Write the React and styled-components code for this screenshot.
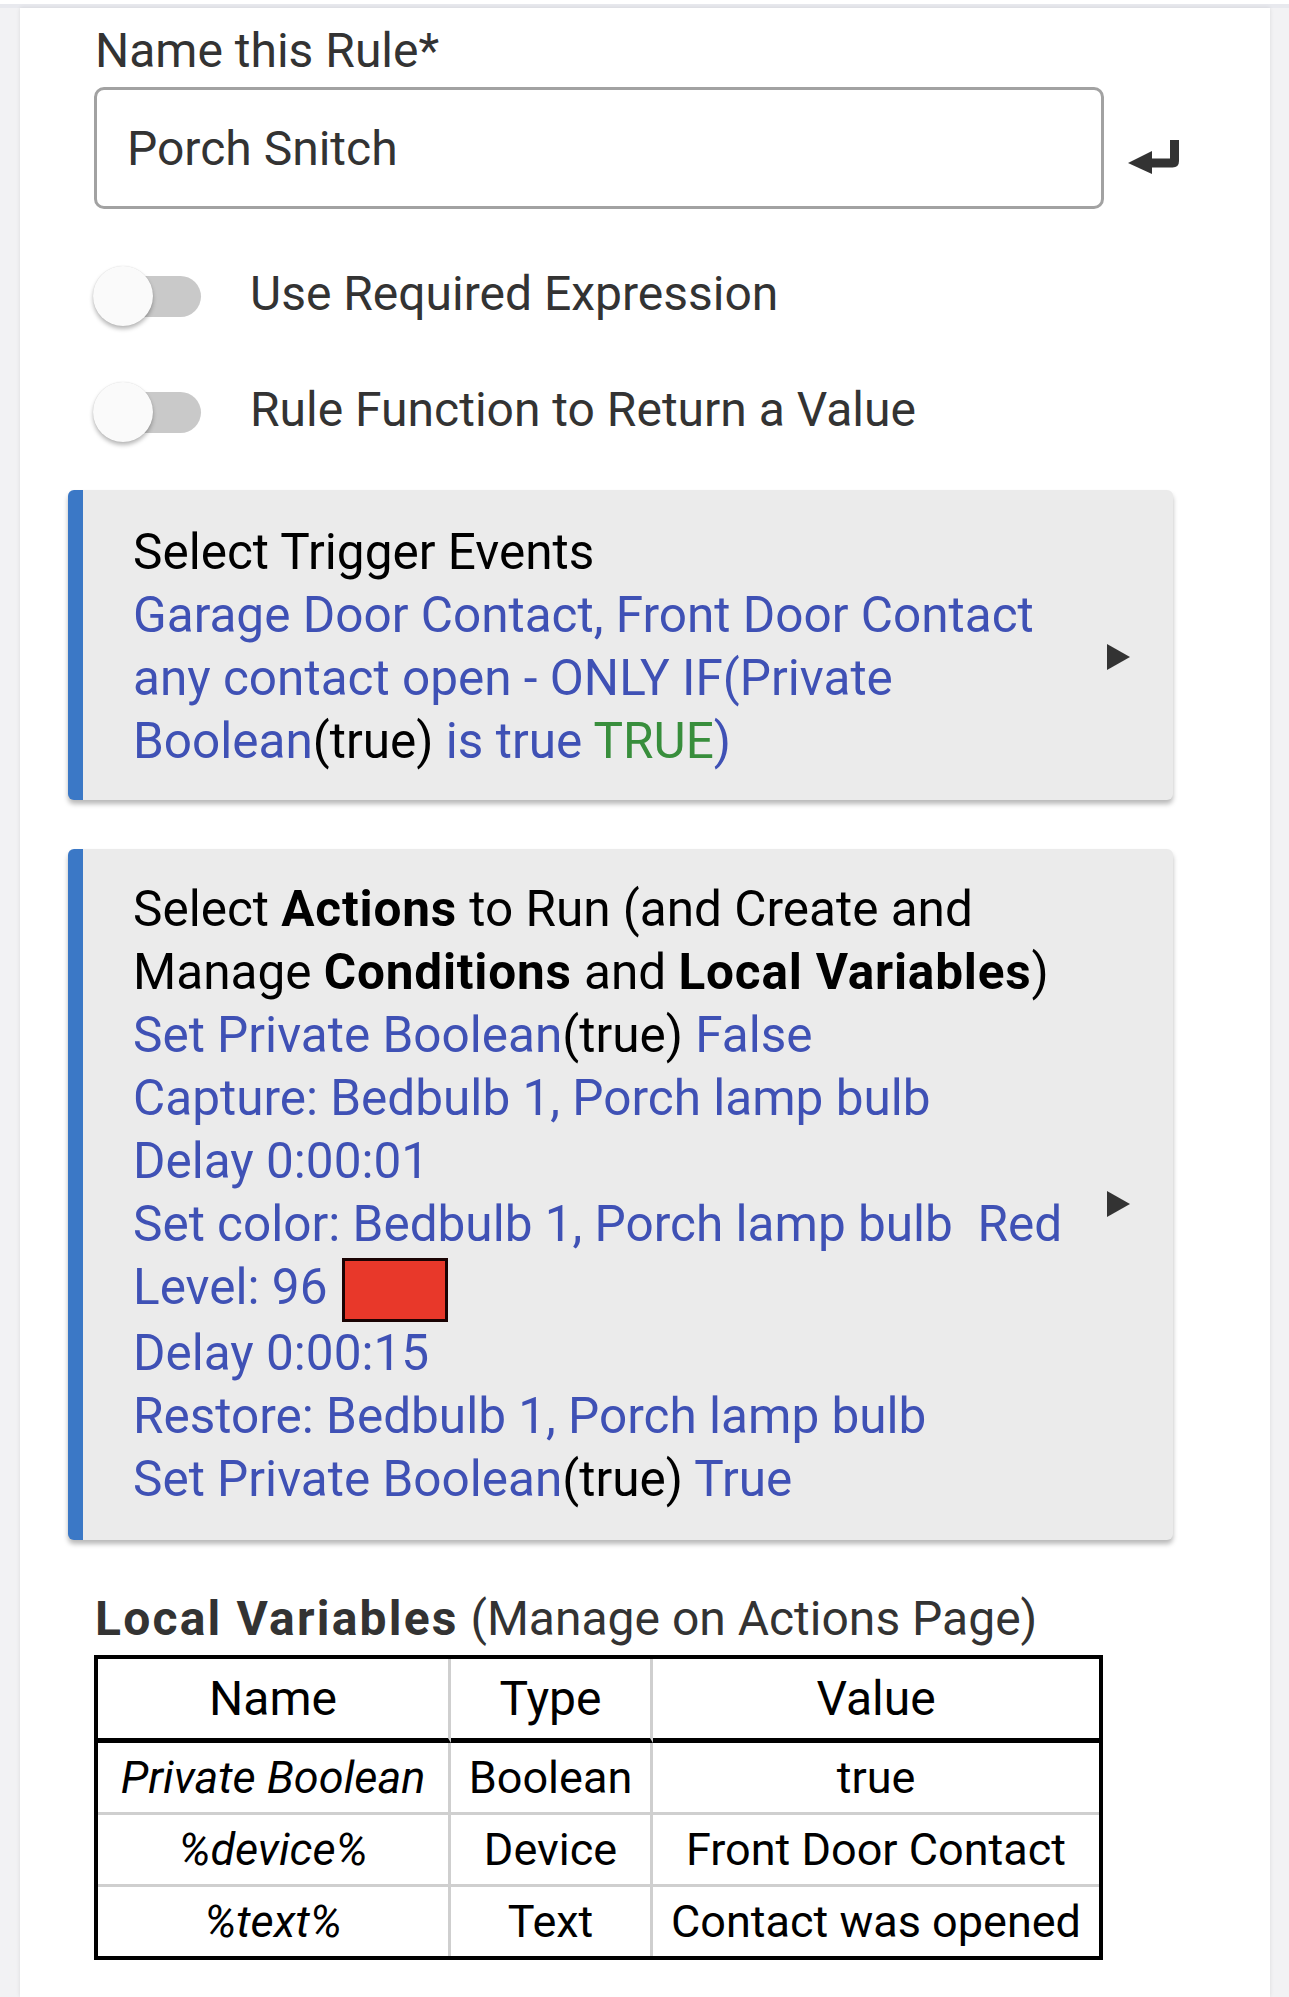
import React from 'react';
import styled, { createGlobalStyle } from 'styled-components';

const GlobalStyle = createGlobalStyle`
  html, body { margin: 0; padding: 0; }
  body {
    background: #f2f2f4;
    font-family: Roboto, "Noto Sans", "Liberation Sans", Arial, sans-serif;
    -webkit-font-smoothing: antialiased;
  }
`;

const Frame = styled.div`
  min-height: 1997px;
  border-top: 4px solid #ffffff;
`;

const TopBand = styled.div`
  height: 4px;
  background: #e8e9ee;
`;

const Sheet = styled.main`
  margin: 0 19px 0 20px;
  min-height: 1989px;
  background: #ffffff;
  box-shadow: 0 0 4px rgba(0, 0, 0, 0.1);
  padding: 11px 0 0 48px;
  box-sizing: border-box;
`;

const Field = styled.div`
  padding-left: 26px;
`;

const Label = styled.div`
  font-size: 48px;
  line-height: 64px;
  color: #333;
  padding-left: 1px;
`;

const InputRow = styled.div`
  display: flex;
  align-items: center;
  margin-top: 4px;
`;

const TextInput = styled.input`
  box-sizing: border-box;
  width: 1010px;
  height: 122px;
  border: 3px solid #a2a2a2;
  border-radius: 10px;
  padding: 0 30px;
  font-family: inherit;
  font-size: 48px;
  color: #333;
  background: #fff;
  outline: none;
`;

const EnterIcon = styled.svg`
  margin-left: 24px;
  margin-top: 18px;
  flex: none;
`;

const ToggleRow = styled.div`
  display: flex;
  align-items: center;
  height: 60px;
  margin-top: ${(p) => p.$gap}px;
  margin-left: -1px;
`;

const Switch = styled.span`
  position: relative;
  display: inline-block;
  width: 108px;
  height: 41px;
  flex: none;
`;

const Track = styled.span`
  display: block;
  margin-left: 5px;
  width: 103px;
  height: 41px;
  border-radius: 21px;
  background: #c9c9c9;
`;

const Knob = styled.span`
  position: absolute;
  left: 0;
  top: -10px;
  width: 60px;
  height: 60px;
  border-radius: 50%;
  background: #fafafa;
  box-shadow: 0 3px 4px rgba(0, 0, 0, 0.28), 0 0 1px rgba(0, 0, 0, 0.15);
`;

const ToggleText = styled.span`
  margin-left: 49px;
  margin-top: -6px;
  font-size: 48px;
  color: #333;
`;

const Panel = styled.section`
  display: flex;
  align-items: center;
  width: 1105px;
  box-sizing: border-box;
  margin-top: ${(p) => p.$gap}px;
  padding: ${(p) => p.$pad};
  background: #ebebeb;
  border-left: 15px solid #3b78c6;
  border-radius: 6px;
  box-shadow: 0 4px 5px rgba(0, 0, 0, 0.28);
`;

const PanelText = styled.div`
  flex: 1;
  font-size: 49.5px;
  line-height: 63px;
  color: #000;
`;

const Line = styled.div``;

const Blue = styled.span`
  color: #3f51b5;
`;

const Green = styled.span`
  color: #388e3c;
`;

const Strong = styled.b`
  font-weight: 700;
  letter-spacing: ${(p) => p.$spacing || 0}px;
`;

const Swatch = styled.span`
  display: inline-block;
  vertical-align: middle;
  box-sizing: border-box;
  width: 106px;
  height: 64px;
  margin: -2px 0 0 15px;
  background: #e8382a;
  border: 3px solid #1a0303;
`;

const Chevron = styled.svg`
  flex: none;
  margin-left: 27px;
  margin-top: 20px;
`;

const Heading = styled.div`
  margin-top: 47px;
  font-size: 48px;
  line-height: 64px;
  color: #333;
  padding-left: 1px;
`;

const Grid = styled.div`
  margin-top: 4px;
  width: 1009px;
  box-sizing: border-box;
  border: 4px solid #000;
  display: grid;
  grid-template-columns: 353px 202px 1fr;
`;

const HeadCell = styled.div`
  box-sizing: border-box;
  height: 84px;
  display: flex;
  align-items: center;
  justify-content: center;
  font-size: 48px;
  color: #000;
  border-bottom: 5px solid #000;
  border-right: ${(p) => (p.$last ? 'none' : '3px solid #cfcfcf')};
`;

const Cell = styled.div`
  box-sizing: border-box;
  height: ${(p) => (p.$bottom ? 69 : 72)}px;
  display: flex;
  align-items: center;
  justify-content: center;
  font-size: 45px;
  color: #000;
  font-style: ${(p) => (p.$italic ? 'italic' : 'normal')};
  white-space: nowrap;
  border-bottom: ${(p) => (p.$bottom ? 'none' : '3px solid #cfcfcf')};
  border-right: ${(p) => (p.$last ? 'none' : '3px solid #cfcfcf')};
`;

const ArrowRight = () => (
  <Chevron width="23" height="26" viewBox="0 0 23 26">
    <polygon points="0,0 23,13 0,26" fill="#333" />
  </Chevron>
);

const rows = [
  ['Private Boolean', 'Boolean', 'true'],
  ['%device%', 'Device', 'Front Door Contact'],
  ['%text%', 'Text', 'Contact was opened'],
];

export default function App() {
  return (
    <>
      <GlobalStyle />
      <Frame>
        <TopBand />
        <Sheet>
          <Field>
            <Label>Name this Rule*</Label>
            <InputRow>
              <TextInput defaultValue="Porch Snitch" readOnly />
              <EnterIcon width="52" height="34" viewBox="0 0 52 34">
                <path
                  d="M42 0 H51 V21 Q51 27.5 44.5 27.5 H23 V18.5 H42 Z"
                  fill="#333"
                />
                <polygon points="0,23 24,11 24,34" fill="#333" />
              </EnterIcon>
            </InputRow>
            <ToggleRow $gap={57}>
              <Switch>
                <Track />
                <Knob />
              </Switch>
              <ToggleText>Use Required Expression</ToggleText>
            </ToggleRow>
            <ToggleRow $gap={56}>
              <Switch>
                <Track />
                <Knob />
              </Switch>
              <ToggleText>Rule Function to Return a Value</ToggleText>
            </ToggleRow>
          </Field>

          <Panel $gap={48} $pad="31px 43px 27px 50px">
            <PanelText>
              <Line>Select Trigger Events</Line>
              <Line>
                <Blue>
                  Garage Door Contact, Front Door Contact any contact open - ONLY IF(Private
                  Boolean
                </Blue>
                (true)
                <Blue> is true </Blue>
                <Green>TRUE</Green>
                <Blue>)</Blue>
              </Line>
            </PanelText>
            <ArrowRight />
          </Panel>

          <Panel $gap={49} $pad="29px 43px 29px 50px">
            <PanelText>
              <Line>
                Select <Strong $spacing={0.8}>Actions</Strong> to Run (and Create and Manage{' '}
                <Strong $spacing={0.8}>Conditions</Strong> and{' '}
                <Strong $spacing={0.8}>Local Variables</Strong>)
              </Line>
              <Line>
                <Blue>Set Private Boolean</Blue>(true) <Blue>False</Blue>
              </Line>
              <Line>
                <Blue>Capture: Bedbulb 1, Porch lamp bulb</Blue>
              </Line>
              <Line>
                <Blue>Delay 0:00:01</Blue>
              </Line>
              <Line>
                <Blue>Set color: Bedbulb 1, Porch lamp bulb&nbsp; Red Level: 96</Blue>
                <Swatch />
              </Line>
              <Line>
                <Blue>Delay 0:00:15</Blue>
              </Line>
              <Line>
                <Blue>Restore: Bedbulb 1, Porch lamp bulb</Blue>
              </Line>
              <Line>
                <Blue>Set Private Boolean</Blue>(true) <Blue>True</Blue>
              </Line>
            </PanelText>
            <ArrowRight />
          </Panel>

          <Field>
            <Heading>
              <Strong $spacing={2.2}>Local Variables</Strong> (Manage on Actions Page)
            </Heading>
            <Grid>
              <HeadCell>Name</HeadCell>
              <HeadCell>Type</HeadCell>
              <HeadCell $last>Value</HeadCell>
              {rows.map((r, i) => (
                <React.Fragment key={r[0]}>
                  <Cell $italic $bottom={i === rows.length - 1}>
                    {r[0]}
                  </Cell>
                  <Cell $bottom={i === rows.length - 1}>{r[1]}</Cell>
                  <Cell $last $bottom={i === rows.length - 1}>
                    {r[2]}
                  </Cell>
                </React.Fragment>
              ))}
            </Grid>
          </Field>
        </Sheet>
      </Frame>
    </>
  );
}
